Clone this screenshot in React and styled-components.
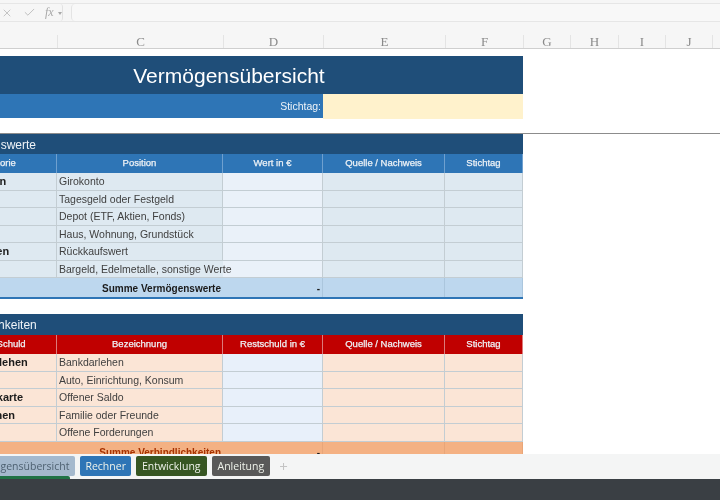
import { createGlobalStyle, styled } from "styled-components";
import { Check, X } from "lucide-react";

const Global = createGlobalStyle`
  html, body { margin: 0; padding: 0; background: #fff; }
  body { font-family: "Liberation Sans", Arial, sans-serif; }
`;

const Window = styled.div`
  width: 720px;
  height: 500px;
  overflow: hidden;
  display: flex;
  flex-direction: column;
  background: #f6f6f6;
  filter: blur(0.45px);
`;

const FormulaBar = styled.div`
  height: 19px;
  margin-top: 3px;
  display: flex;
  gap: 8px;
  border-top: 1px solid #e6e6e6;
  border-bottom: 1px solid #e6e6e6;
  box-sizing: border-box;
  flex: none;
`;

const FormulaTools = styled.div`
  width: 63px;
  display: flex;
  align-items: center;
  box-sizing: border-box;
  padding-left: 1px;
  gap: 10px;
  color: #a8a8a8;
  border-right: 1px solid #e2e2e2;
  border-radius: 0 3px 3px 0;
`;

const Fx = styled.span`
  font: italic 12px "Liberation Serif", serif;
  display: flex;
  align-items: center;
  gap: 4px;
  margin-left: -1px;
  &::after {
    content: "";
    border: 2px solid transparent;
    border-top: 3px solid #a8a8a8;
    margin-top: 3px;
  }
`;

const FormulaInput = styled.div`
  flex: 1;
  background: #f8f8f8;
  border-left: 1px solid #e4e4e4;
  border-radius: 4px 0 0 4px;
`;

const ColumnHeads = styled.div`
  height: 27px;
  display: flex;
  align-items: flex-end;
  border-bottom: 1px solid #cfcfcf;
  box-sizing: border-box;
  flex: none;
  padding-left: 57px;
`;

const ColumnHead = styled.div`
  width: ${(p) => p.$w}px;
  height: 13px;
  flex: none;
  box-sizing: border-box;
  text-align: center;
  border-left: 1px solid #e4e4e4;
  font: 13px/13px "Liberation Serif", serif;
  color: #8a8a8a;
`;

const Frozen = styled.div`
  height: 85px;
  flex: none;
  border-bottom: 1px solid #8c8c8c;
  box-sizing: border-box;
  padding-top: 7px;
  background: #fff;
`;

const Sheet = styled.div`
  width: 588px;
  margin-left: -65px;
`;

const TitleBar = styled.div`
  height: 38px;
  line-height: 40px;
  text-align: center;
  background: #1f4e79;
  color: #fff;
  font-size: 21px;
`;

const DateBar = styled.div`
  height: 24px;
  display: grid;
  grid-template-columns: 388px 200px;
  background: #2e75b6;
`;

const DateLabel = styled.div`
  text-align: right;
  padding-right: 2px;
  font-size: 10.5px;
  line-height: 25px;
  color: #eef3f8;
`;

const DateInput = styled.div`
  background: #fff2cc;
`;

const Body = styled.div`
  flex: 1;
  min-height: 0;
  overflow: hidden;
  background: #fff;
`;

const Block = styled.section`
  width: 588px;
  margin-left: -65px;
  margin-bottom: 15px;
`;

const BlockTitle = styled.h2`
  margin: 0;
  height: ${(p) => p.$h}px;
  line-height: ${(p) => p.$h + 2}px;
  padding-left: 11px;
  background: #1f4e79;
  color: #f0f4f8;
  font-size: 12px;
  font-weight: 400;
`;

const Row = styled.div`
  display: grid;
  grid-template-columns: 122px 166px 100px 122px 78px;
  grid-template-rows: minmax(0, 1fr);
  height: ${(p) => p.$h}px;
  box-sizing: border-box;
  background: ${(p) => p.$bg};
  border-bottom: ${(p) => p.$rule || "1px solid #c3cdd3"};
`;

const HeadCell = styled.div`
  text-align: center;
  line-height: 18px;
  font-size: 9.5px;
  -webkit-text-stroke: 0.25px #eef2f6;
  color: #eef2f6;
  background: ${(p) => p.$bg};
  border-right: 1px solid ${(p) => p.$line};
`;

const Cell = styled.div`
  box-sizing: border-box;
  padding-left: 2px;
  white-space: nowrap;
  font-size: 10.5px;
  line-height: 17px;
  color: #404040;
  border-right: 1px solid ${(p) => (p.$spill ? "transparent" : "#c3cdd3")};
  background: ${(p) => p.$bg || "transparent"};
  position: ${(p) => (p.$spill ? "relative" : "static")};
  z-index: ${(p) => (p.$spill ? 1 : "auto")};
`;

const NameCell = styled(Cell)`
  padding-left: ${(p) => p.$indent || 20}px;
  font-weight: 700;
  font-size: 11px;
  color: #1c1c1c;
`;

const SumCell = styled.div`
  text-align: right;
  padding-right: 2px;
  font-size: 10px;
  font-weight: 700;
  line-height: 21px;
  color: ${(p) => p.$color};
  border-right: ${(p) => (p.$line ? `1px solid ${p.$line}` : "0")};
`;

const SumTitle = styled(SumCell)`
  grid-column: span 2;
`;

const TabBar = styled.div`
  height: 25px;
  flex: none;
  display: flex;
  align-items: flex-start;
  gap: 5px;
  padding-top: 2px;
  box-sizing: border-box;
  background: #f4f5f5;
  font-family: "Open Sans", sans-serif;
`;

const Tab = styled.div`
  height: 20px;
  line-height: 20px;
  padding: 0 ${(p) => p.$pad || 6}px;
  flex: none;
  border-radius: 2px;
  font-size: 10.5px;
  background: ${(p) => p.$bg};
  color: ${(p) => p.$color || "#eef2ea"};
`;

const ActiveTab = styled(Tab)`
  margin-left: -38px;
  position: relative;
  &::after {
    content: "";
    position: absolute;
    left: 0;
    right: 5px;
    top: 20px;
    height: 3px;
    background: #217346;
    border-radius: 0 2px 0 0;
  }
`;

const AddTab = styled.div`
  margin-left: 4px;
  line-height: 20px;
  font-size: 15px;
  color: #c4c4c4;
`;

const StatusBar = styled.div`
  height: 21px;
  flex: none;
  background: #3a3f44;
`;

const heads = [
  ["C", 166],
  ["D", 100],
  ["E", 122],
  ["F", 78],
  ["G", 47],
  ["H", 48],
  ["I", 47],
  ["J", 47],
  ["", 20],
];

const assets = [
  ["Guthaben", "Girokonto"],
  ["Sparen", "Tagesgeld oder Festgeld"],
  ["Depot", "Depot (ETF, Aktien, Fonds)"],
  ["Haus", "Haus, Wohnung, Grundstück"],
  ["Vorsorgen", "Rückkaufswert"],
  ["Sonst", "Bargeld, Edelmetalle, sonstige Werte", true],
];

const debts = [
  ["Bankdarlehen", "Bankdarlehen"],
  ["Kredite", "Auto, Einrichtung, Konsum"],
  ["Kreditkarte", "Offener Saldo", false, 30],
  ["Darlehen", "Familie oder Freunde", false, 33],
  ["Offen", "Offene Forderungen"],
];

function TableHead({ labels, bg, line }) {
  return (
    <Row $h={19} $bg={bg} $rule="none">
      {labels.map((label) => (
        <HeadCell key={label} $bg={bg} $line={line}>
          {label}
        </HeadCell>
      ))}
    </Row>
  );
}

function DataRows({ rows, bg, input }) {
  return rows.map(([name, text, spill, indent], i) => (
    <Row key={text} $h={i % 2 ? 17 : 18} $bg={bg}>
      <NameCell $indent={indent}>{name}</NameCell>
      <Cell $spill={spill} $bg={bg}>
        {text}
      </Cell>
      <Cell $bg={input} />
      <Cell />
      <Cell />
    </Row>
  ));
}

function SumRow({ label, bg, rule, color, line }) {
  return (
    <Row $h={21} $bg={bg} $rule={rule}>
      <SumTitle $color={color}>{label}</SumTitle>
      <SumCell $color="#1a1a1a" $line={line}>
        -
      </SumCell>
      <SumCell $line={line} />
      <SumCell $line={line} />
    </Row>
  );
}

export default function App() {
  return (
    <Window>
      <Global />
      <FormulaBar>
        <FormulaTools>
          <X size={12} strokeWidth={1.3} />
          <Check size={13} strokeWidth={1.3} />
          <Fx>fx</Fx>
        </FormulaTools>
        <FormulaInput />
      </FormulaBar>
      <ColumnHeads>
        {heads.map(([letter, w]) => (
          <ColumnHead key={w + letter} $w={w}>
            {letter}
          </ColumnHead>
        ))}
      </ColumnHeads>
      <Frozen>
        <Sheet>
          <TitleBar>Vermögensübersicht</TitleBar>
          <DateBar>
            <DateLabel>Stichtag:</DateLabel>
            <DateInput />
          </DateBar>
        </Sheet>
      </Frozen>
      <Body>
        <Block>
          <BlockTitle $h={20}>Vermögenswerte</BlockTitle>
          <TableHead
            labels={["Kategorie", "Position", "Wert in €", "Quelle / Nachweis", "Stichtag"]}
            bg="#2e75b6"
            line="#6fa0cf"
          />
          <DataRows rows={assets} bg="#dee9f1" input="#eaf1f9" />
          <SumRow
            label="Summe Vermögenswerte"
            bg="#bdd7ee"
            rule="2px solid #2e75b6"
            color="#1a1a1a"
            line="#abc6dd"
          />
        </Block>
        <Block>
          <BlockTitle $h={21}>Verbindlichkeiten</BlockTitle>
          <TableHead
            labels={["Art der Schuld", "Bezeichnung", "Restschuld in €", "Quelle / Nachweis", "Stichtag"]}
            bg="#c00000"
            line="#dc7a7a"
          />
          <DataRows rows={debts} bg="#fbe5d6" input="#e8f0fa" />
          <SumRow label="Summe Verbindlichkeiten" bg="#f4b183" rule="none" color="#a83200" line="#e8a679" />
        </Block>
      </Body>
      <TabBar>
        <ActiveTab $bg="#a5b9cd" $color="#4f6272">
          Vermögensübersicht
        </ActiveTab>
        <Tab $bg="#2e75b6" $pad={5}>
          Rechner
        </Tab>
        <Tab $bg="#375623">Entwicklung</Tab>
        <Tab $bg="#595959">Anleitung</Tab>
        <AddTab>+</AddTab>
      </TabBar>
      <StatusBar />
    </Window>
  );
}
